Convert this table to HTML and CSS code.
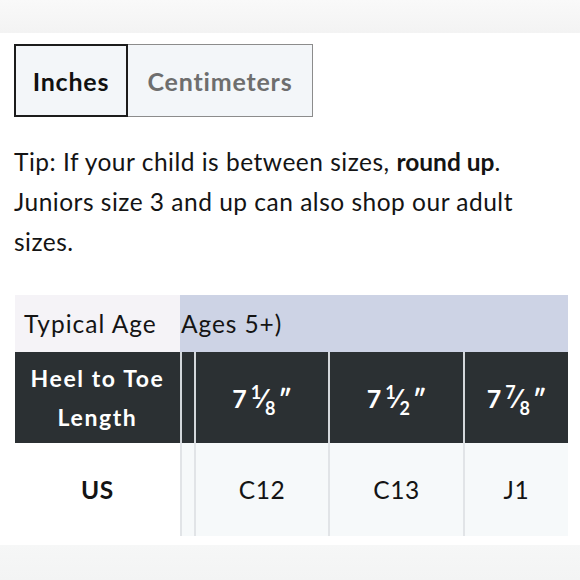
FILE: index.html
```html
<!DOCTYPE html>
<html lang="en">
<head>
<meta charset="utf-8">
<link rel="stylesheet" href="styles.css">
</head>
<body>
<div class="top-band"></div>
<main class="content">
  <div class="tabs">
    <button class="tab tab-active">Inches</button>
    <button class="tab">Centimeters</button>
  </div>
  <p class="tip">Tip: If your child is between sizes, <strong>round up</strong>. Juniors size 3 and up can also shop our adult sizes.</p>
  <div class="size-table">
    <div class="cell age-label">Typical Age</div>
    <div class="cell age-value">Ages 5+)</div>

    <div class="cell head head-first">Heel to Toe Length</div>
    <div class="cell head sep"></div>
    <div class="cell head sep"><span class="whole">7</span><span class="frac"><span class="num">1</span><span class="slash">⁄</span><span class="den">8</span></span><span class="inch">″</span></div>
    <div class="cell head sep"><span class="whole">7</span><span class="frac"><span class="num">1</span><span class="slash">⁄</span><span class="den">2</span></span><span class="inch">″</span></div>
    <div class="cell head sep"><span class="whole">7</span><span class="frac"><span class="num">7</span><span class="slash">⁄</span><span class="den">8</span></span><span class="inch">″</span></div>

    <div class="cell body body-first">US</div>
    <div class="cell body sep"></div>
    <div class="cell body sep">C12</div>
    <div class="cell body sep">C13</div>
    <div class="cell body sep">J1</div>
  </div>
</main>
<div class="bottom-band"></div>
</body>
</html>
```

FILE: styles.css
```css
html, body {
  margin: 0;
  padding: 0;
  background: #ffffff;
  font-family: "Lato", "Open Sans", sans-serif;
  color: #141414;
}

.top-band {
  height: 33px;
  background: linear-gradient(to bottom, #f9f9f9, #f3f3f3);
}

.content {
  padding: 11px 12px 0 14px;
  height: 501px;
  box-sizing: border-box;
}

.tabs {
  display: flex;
  height: 73px;
}

.tab {
  font-family: inherit;
  font-size: 25px;
  font-weight: 700;
  letter-spacing: 0.8px;
  background: #f3f6f9;
  margin: 0;
  padding: 0;
  color: #6e6e6e;
  border: 1px solid #8c8c8c;
  border-left: none;
  width: 185px;
  height: 73px;
  box-sizing: border-box;
}

.tab-active {
  width: 114px;
  color: #111111;
  border: 2px solid #1c1c1c;
}

.tip {
  margin: 25px 0 0;
  font-size: 24.5px;
  letter-spacing: 0.5px;
  line-height: 40px;
  color: #141414;
}

.tip strong {
  font-weight: 700;
  letter-spacing: 0;
}

.size-table {
  margin-top: 33px;
  margin-left: 1px;
  display: grid;
  grid-template-columns: 165px 14px 134px 135px 105px;
  grid-template-rows: 57px 91px 93px;
}

.cell {
  display: flex;
  align-items: center;
  justify-content: center;
  box-sizing: border-box;
  text-align: center;
}

.age-label {
  background: #f5f3f7;
  justify-content: flex-start;
  padding-left: 9px;
  font-size: 24.5px;
  letter-spacing: 1px;
}

.age-value {
  grid-column: 2 / 6;
  background: #cdd3e5;
  justify-content: flex-start;
  padding-left: 1px;
  font-size: 24.5px;
  letter-spacing: 0.9px;
}

.head {
  background: #2b3033;
  color: #ffffff;
  font-weight: 700;
  font-size: 25px;
}

.head-first {
  font-size: 23px;
  letter-spacing: 1.6px;
  line-height: 39px;
  padding: 0 4px;
}

.whole {
  margin-right: 4px;
}

.frac {
  display: inline-flex;
  align-items: center;
  font-size: 18px;
  height: 32px;
}

.num {
  align-self: flex-start;
  margin-top: -1px;
}

.slash {
  font-size: 27px;
  font-weight: 700;
}

.den {
  align-self: flex-end;
  margin-bottom: -5px;
}

.inch {
  margin-left: 3px;
}

.body {
  background: #f6f9fa;
  font-size: 24.5px;
  letter-spacing: 0.6px;
}

.body-first {
  background: #ffffff;
  font-weight: 700;
}

.head.sep {
  border-left: 2px solid #d3d7db;
}

.body.sep {
  border-left: 2px solid #e1e4e7;
}

.bottom-band {
  height: 35px;
  margin-top: 11px;
  background: linear-gradient(to bottom, #f6f7f7, #f3f4f4);
}
```
